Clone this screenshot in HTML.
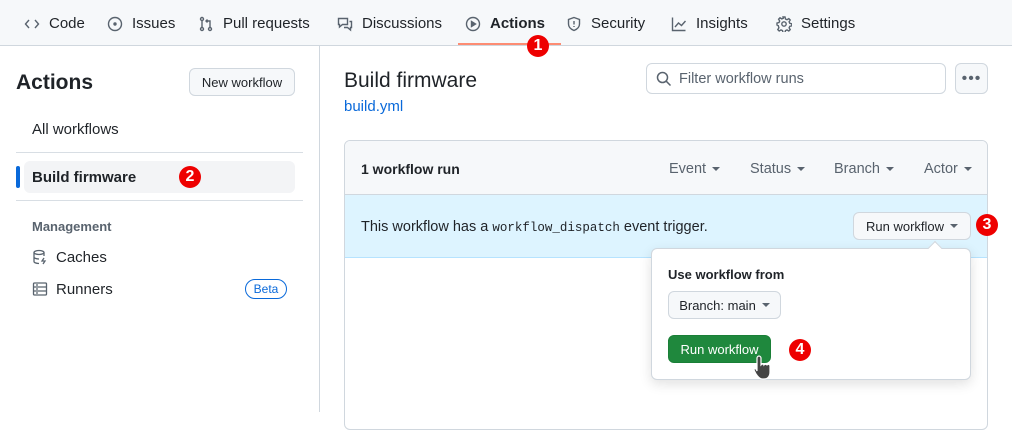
<!DOCTYPE html>
<html><head><meta charset="utf-8"><style>
*{box-sizing:border-box;margin:0;padding:0}
body{width:1012px;height:412px;overflow:hidden;background:#fff;font-family:"Liberation Sans",sans-serif;color:#1f2328;position:relative;font-size:14px}
.a{position:absolute;white-space:nowrap}
.nav{position:absolute;left:0;top:0;width:1012px;height:46px;background:#f6f8fa;border-bottom:1px solid #d0d7de}
.tab{position:absolute;top:15px;font-size:15px;color:#1f2328;display:flex;align-items:center;gap:9px}
.tab svg{width:16px;height:16px;fill:none;stroke:#59636e;stroke-width:1.4}
.btn{position:absolute;background:#f6f8fa;border:1px solid #d0d7de;border-radius:6px;font-size:13px;display:flex;align-items:center;justify-content:center;color:#1f2328}
.badge{position:absolute;width:22px;height:22px;border-radius:50%;background:#e00;color:#fff;font-weight:bold;font-size:16px;display:flex;align-items:center;justify-content:center}
.caret{display:inline-block;width:0;height:0;border-left:4px solid transparent;border-right:4px solid transparent;border-top:4px solid #59636e;margin-left:6px;vertical-align:middle}
.hr{position:absolute;height:1px;background:#d8dee4}
</style></head><body>
<div class="nav"></div>
<div class="tab" style="left:24px"><svg viewBox="0 0 16 16"><path d="M5 4L1.5 8 5 12M11 4l3.5 4L11 12"/></svg>Code</div>
<div class="tab" style="left:107px"><svg viewBox="0 0 16 16"><circle cx="8" cy="8" r="6.5"/><circle cx="8" cy="8" r="1" fill="#59636e"/></svg>Issues</div>
<div class="tab" style="left:198px"><svg viewBox="0 0 16 16"><circle cx="4" cy="3" r="1.5"/><circle cx="4" cy="13" r="1.5"/><circle cx="12" cy="13" r="1.5"/><path d="M4 4.5v7M12 11.5V5H8M9.5 3.5L8 5l1.5 1.5"/></svg>Pull requests</div>
<div class="tab" style="left:337px"><svg viewBox="0 0 16 16"><path d="M1.5 2.5h9v6h-5l-3 2.5v-2.5h-1zM12.5 5.5h2v6h-1V14l-3-2.5H7"/></svg>Discussions</div>
<div class="tab" style="left:465px;font-weight:bold"><svg viewBox="0 0 16 16"><circle cx="8" cy="8" r="6.5"/><path d="M6.5 5.5v5l4-2.5z" fill="#59636e"/></svg>Actions</div>
<div class="tab" style="left:566px"><svg viewBox="0 0 16 16"><path d="M8 1.5l5.5 2v4.5c0 3.5-3 5.5-5.5 6.5C5.5 13.5 2.5 11.5 2.5 8V3.5z"/><path d="M8 5v3.5M8 10v1"/></svg>Security</div>
<div class="tab" style="left:671px"><svg viewBox="0 0 16 16"><path d="M1.5 1.5v13h13M4 11l3.5-4 3 2.5L14.5 5"/></svg>Insights</div>
<div class="tab" style="left:776px"><svg viewBox="0 0 16 16"><circle cx="8" cy="8" r="2.2"/><path d="M7 1h2l.5 2 1.5.7 1.8-1.1 1.4 1.4-1.1 1.8.7 1.5 2 .5v2l-2 .5-.7 1.5 1.1 1.8-1.4 1.4-1.8-1.1-1.5.7-.5 2H7l-.5-2-1.5-.7-1.8 1.1-1.4-1.4 1.1-1.8L2.2 9.5 1 9V7l2-.5.7-1.5-1.1-1.8 1.4-1.4 1.8 1.1 1.5-.7z"/></svg>Settings</div>
<div class="a" style="left:458px;top:43px;width:103px;height:2px;background:#fd8c73"></div>
<div class="badge" style="left:527px;top:35px">1</div>

<div class="a" style="left:319px;top:46px;width:1px;height:366px;background:#d0d7de"></div>
<div class="a" style="left:16px;top:71px;font-size:21px;font-weight:bold">Actions</div>
<div class="btn" style="left:189px;top:68px;width:106px;height:28px">New workflow</div>
<div class="a" style="left:32px;top:121px;font-size:15px">All workflows</div>
<div class="hr" style="left:16px;top:152px;width:287px"></div>
<div class="a" style="left:24px;top:161px;width:271px;height:32px;background:#f3f4f6;border-radius:6px"></div>
<div class="a" style="left:16px;top:166px;width:4px;height:22px;background:#0969da;border-radius:2px"></div>
<div class="a" style="left:32px;top:169px;font-size:15px;font-weight:bold">Build firmware</div>
<div class="badge" style="left:179px;top:166px">2</div>
<div class="hr" style="left:16px;top:200px;width:287px"></div>
<div class="a" style="left:32px;top:219px;font-size:13px;font-weight:bold;color:#59636e">Management</div>
<svg class="a" style="left:32px;top:249px" width="16" height="16" viewBox="0 0 16 16" fill="none" stroke="#59636e" stroke-width="1.3"><ellipse cx="7" cy="3.5" rx="5" ry="2"/><path d="M2 3.5v9c0 1 2 2 5 2M12 3.5V7M2 8c0 1 2 2 5 2M12 9l-2 3h3l-2 3"/></svg>
<div class="a" style="left:56px;top:249px;font-size:15px">Caches</div>
<svg class="a" style="left:32px;top:281px" width="16" height="16" viewBox="0 0 16 16" fill="none" stroke="#59636e" stroke-width="1.3"><rect x="1.5" y="2" width="13" height="12" rx="1"/><path d="M1.5 6h13M1.5 10h13M4 4h2M4 8h2M4 12h2"/></svg>
<div class="a" style="left:56px;top:281px;font-size:15px">Runners</div>
<div class="a" style="left:245px;top:279px;width:42px;height:20px;border:1px solid #0969da;border-radius:10px;color:#0969da;font-size:12px;text-align:center;line-height:18px">Beta</div>

<div class="a" style="left:344px;top:69px;font-size:21px">Build firmware</div>
<div class="a" style="left:344px;top:98px;font-size:15px;color:#0969da">build.yml</div>
<div class="a" style="left:646px;top:63px;width:300px;height:31px;border:1px solid #d0d7de;border-radius:6px;background:#fff"></div>
<svg class="a" style="left:656px;top:71px" width="16" height="16" viewBox="0 0 16 16" fill="none" stroke="#59636e" stroke-width="1.5"><circle cx="6.5" cy="6.5" r="5"/><path d="M10.2 10.2L14.5 14.5"/></svg>
<div class="a" style="left:679px;top:71px;font-size:14.5px;color:#59636e">Filter workflow runs</div>
<div class="btn" style="left:955px;top:63px;width:33px;height:31px;font-size:16px;color:#59636e;letter-spacing:1px">•••</div>

<div class="a" style="left:344px;top:140px;width:644px;height:290px;border:1px solid #d0d7de;border-radius:6px;overflow:hidden">
 <div style="position:absolute;left:0;top:0;width:100%;height:54px;background:#f6f8fa;border-bottom:1px solid #d0d7de"></div>
 <div style="position:absolute;left:0;top:54px;width:100%;height:63px;background:#ddf4ff;border-bottom:1px solid #b6e3ff"></div>
</div>
<div class="a" style="left:361px;top:161px;font-weight:bold">1 workflow run</div>
<div class="a" style="left:669px;top:161px;color:#59636e;font-size:14.5px">Event<span class="caret"></span></div>
<div class="a" style="left:750px;top:161px;color:#59636e;font-size:14.5px">Status<span class="caret"></span></div>
<div class="a" style="left:834px;top:161px;color:#59636e;font-size:14.5px">Branch<span class="caret"></span></div>
<div class="a" style="left:924px;top:161px;color:#59636e;font-size:14.5px">Actor<span class="caret"></span></div>
<div class="a" style="left:361px;top:219px;font-size:14.5px">This workflow has a <span style="font-family:'Liberation Mono',monospace;font-size:12.5px">workflow_dispatch</span> event trigger.</div>
<div class="btn" style="left:853px;top:212px;width:118px;height:28px">Run workflow<span class="caret"></span></div>
<div class="badge" style="left:976px;top:214px">3</div>

<div class="a" style="left:651px;top:248px;width:320px;height:132px;background:#fff;border:1px solid #d0d7de;border-radius:6px;box-shadow:0 4px 12px rgba(0,0,0,.12)"></div>
<div class="a" style="left:930px;top:243px;width:10px;height:10px;background:#fff;border-left:1px solid #d0d7de;border-top:1px solid #d0d7de;transform:rotate(45deg)"></div>
<div class="a" style="left:668px;top:267px;font-size:13px;font-weight:bold">Use workflow from</div>
<div class="btn" style="left:668px;top:291px;width:113px;height:28px">Branch: main<span class="caret"></span></div>
<div class="btn" style="left:668px;top:335px;width:103px;height:28px;background:#1f883d;border-color:#1a7f37;color:#fff">Run workflow</div>
<svg class="a" style="left:752px;top:354px" width="24" height="26" viewBox="0 0 24 26"><path d="M7 2c1 0 2 1 2 2v7l1-1c1 0 2 0 2 1 1-1 2-1 3 0 1-1 3-1 3 1v6c0 4-2 7-6 7h-2c-2 0-4-2-6-5l-2-4c0-1 1-2 2-1l1 2V4c0-1 1-2 2-2z" fill="#444" stroke="#fff" stroke-width="1.2"/></svg>
<div class="badge" style="left:789px;top:339px">4</div>
</body></html>
